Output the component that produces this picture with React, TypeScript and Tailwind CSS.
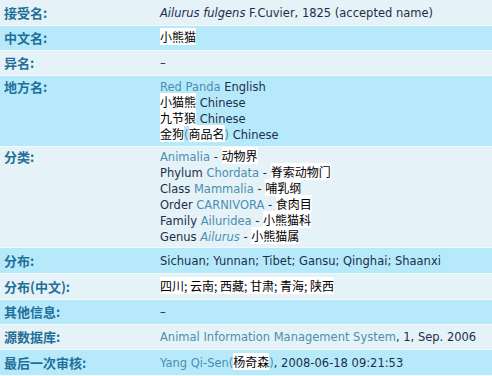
import React from "react";

const cjk = "font-['Noto_Sans_CJK_SC',sans-serif]";

const Zh = ({ children }: { children: React.ReactNode }) => (
  <span className={`bg-white text-black ${cjk} text-[12px] leading-none`}>{children}</span>
);

const A = ({ children, italic }: { children: React.ReactNode; italic?: boolean }) => (
  <span className={`text-[#4b8fb0] ${italic ? "italic" : ""}`}>{children}</span>
);

type Row = { label: string; value: React.ReactNode; h: string; pt?: string };

const rows: Row[] = [
  {
    label: "接受名:",
    h: "h-[25px]",
    value: (
      <>
        <i>Ailurus fulgens</i> F.Cuvier, 1825 (accepted name)
      </>
    ),
  },
  { label: "中文名:", h: "h-[24px]", value: <Zh>小熊猫</Zh> },
  { label: "异名:", h: "h-[24px]", value: "–" },
  {
    label: "地方名:",
    h: "h-[70px]",
    pt: "pt-[3px]",
    value: (
      <>
        <div className="h-4">
          <A>Red Panda</A> English
        </div>
        <div className="h-4">
          <Zh>小猫熊</Zh> Chinese
        </div>
        <div className="h-4">
          <Zh>九节狼</Zh> Chinese
        </div>
        <div className="h-4">
          <Zh>金狗</Zh>
          <A>(</A>
          <Zh>商品名</Zh>
          <A>)</A> Chinese
        </div>
      </>
    ),
  },
  {
    label: "分类:",
    h: "h-[100px]",
    pt: "pt-[2px]",
    value: (
      <>
        <div className="h-4">
          <A>Animalia</A> - <Zh>动物界</Zh>
        </div>
        <div className="h-4">
          Phylum <A>Chordata</A> - <Zh>脊索动物门</Zh>
        </div>
        <div className="h-4">
          Class <A>Mammalia</A> - <Zh>哺乳纲</Zh>
        </div>
        <div className="h-4">
          Order <A>CARNIVORA</A> - <Zh>食肉目</Zh>
        </div>
        <div className="h-4">
          Family <A>Ailuridea</A> - <Zh>小熊猫科</Zh>
        </div>
        <div className="h-4">
          Genus <A italic>Ailurus</A> - <Zh>小熊猫属</Zh>
        </div>
      </>
    ),
  },
  { label: "分布:", h: "h-[25px]", value: "Sichuan; Yunnan; Tibet; Gansu; Qinghai; Shaanxi" },
  {
    label: "分布(中文):",
    h: "h-[25px]",
    value: <Zh>四川; 云南; 西藏; 甘肃; 青海; 陕西</Zh>,
  },
  { label: "其他信息:", h: "h-[24px]", value: "–" },
  {
    label: "源数据库:",
    h: "h-[24px]",
    value: (
      <>
        <A>Animal Information Management System</A>, 1, Sep. 2006
      </>
    ),
  },
  {
    label: "最后一次审核:",
    h: "h-[25px]",
    value: (
      <>
        <A>Yang Qi-Sen(</A>
        <Zh>杨奇森</Zh>
        <A>)</A>, 2008-06-18 09:21:53
      </>
    ),
  },
];

export default function App() {
  return (
    <div className="w-[492px] h-[376px] bg-[#f4fafc] flex flex-col gap-px font-['DejaVu_Sans',sans-serif] text-[11.5px] leading-[16px] text-[#1c2f4a]">
      {rows.map((r, i) => (
        <div
          key={i}
          className={`flex shrink-0 overflow-hidden ${r.h} ${i % 2 === 0 ? "bg-[#e5f2f7]" : "bg-[#b6eafb]"} ${r.pt ? r.pt : "items-center"}`}
        >
          <div className={`w-[156px] shrink-0 pl-1 h-4 leading-4 font-bold text-[13px] text-[#1f6f99] ${cjk}`}>
            {r.label}
          </div>
          <div className="pl-1 whitespace-nowrap">{r.value}</div>
        </div>
      ))}
    </div>
  );
}
